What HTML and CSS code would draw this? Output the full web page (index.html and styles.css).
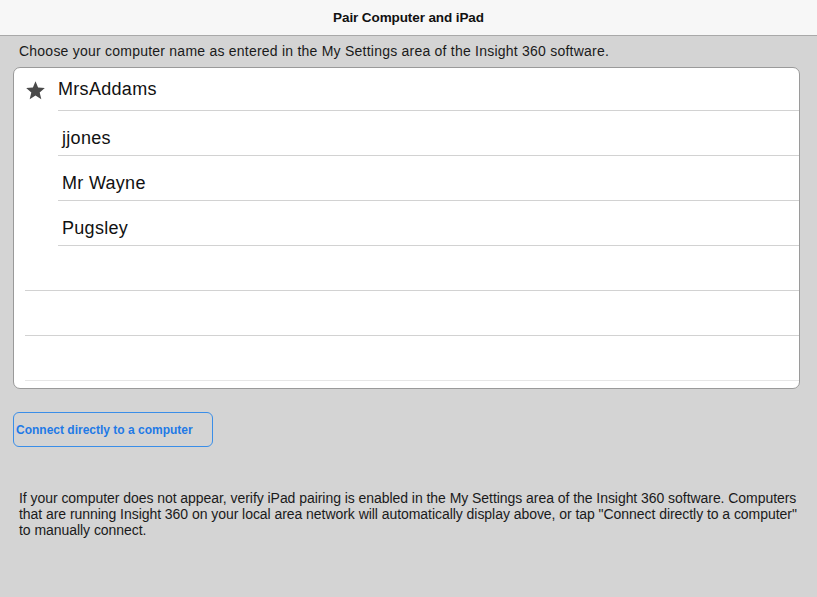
FILE: index.html
```html
<!DOCTYPE html>
<html>
<head>
<meta charset="utf-8">
<link rel="stylesheet" href="styles.css">
</head>
<body>
<header class="bar"><h1 class="title">Pair Computer and iPad</h1></header>
<main class="content">
  <p class="intro">Choose your computer name as entered in the My Settings area of the Insight 360 software.</p>
  <div class="card">
    <div class="row row-first">
      <svg class="star" viewBox="0 0 24 24" width="21" height="20"><path d="M12 1.5l3.1 7.6 8.1.6-6.2 5.3 2 8-7-4.4-7 4.4 2-8L.8 9.7l8.1-.6z" fill="#4a4a4a"/></svg>
      <span class="name name-first">MrsAddams</span>
    </div>
    <div class="row"><span class="name">jjones</span></div>
    <div class="row"><span class="name">Mr Wayne</span></div>
    <div class="row"><span class="name">Pugsley</span></div>
    <div class="row row-empty"></div>
    <div class="row row-empty"></div>
    <div class="row row-empty"></div>
  </div>
  <button class="connect">Connect directly to a computer</button>
  <p class="note">If your computer does not appear, verify iPad pairing is enabled in the My Settings area of the Insight 360 software. Computers<br>that are running Insight 360 on your local area network will automatically display above, or tap "Connect directly to a computer"<br>to manually connect.</p>
</main>
</body>
</html>
```
FILE: styles.css
```css
* { box-sizing: border-box; }
html, body { margin: 0; padding: 0; }
body {
  width: 817px;
  height: 597px;
  background: #d4d4d4;
  font-family: "Liberation Sans", Arial, sans-serif;
  color: #1a1a1a;
  overflow: hidden;
}
.bar {
  height: 36px;
  background: #f7f7f7;
  border-bottom: 1px solid #a9a9a9;
  display: flex;
  align-items: center;
  justify-content: center;
}
.title {
  margin: 0;
  font-size: 13.5px;
  font-weight: bold;
  color: #111;
  letter-spacing: -0.1px;
}
.content {
  padding: 0 17px 0 13px;
}
.intro {
  margin: 0;
  padding: 7px 0 0 6px;
  height: 31px;
  font-size: 14px;
  line-height: 16px;
  color: #1a1a1a;
  letter-spacing: 0.23px;
  white-space: nowrap;
}
.card {
  background: #fff;
  border: 1px solid #9a9a9a;
  border-radius: 7px;
  height: 322px;
  overflow: hidden;
  padding-left: 11px;
}
.row {
  height: 45px;
  display: flex;
  align-items: center;
  border-bottom: 1px solid #d2d2d2;
  margin-left: 33px;
  padding-top: 11px;
}
.row-first {
  height: 43px;
  margin-left: 0;
  padding-top: 0;
  border-bottom: none;
  position: relative;
}
.row-first::after {
  content: "";
  position: absolute;
  left: 33px;
  right: 0;
  bottom: 0;
  border-bottom: 1px solid #d2d2d2;
}
.row-empty { margin-left: 0; }
.row-empty:last-child { border-bottom-color: #e6e6e6; }
.star { flex: none; margin-right: 12px; }
.name {
  font-size: 18px;
  letter-spacing: 0.3px;
  color: #111;
  padding-left: 4px;
}
.name-first { padding-left: 0; }
.connect {
  display: block;
  margin-top: 23px;
  width: 200px;
  height: 35px;
  padding: 0 0 0 2px;
  text-align: left;
  background: transparent;
  border: 1px solid #3a8ee8;
  border-radius: 6px;
  color: #1f7ae6;
  font-family: "Liberation Sans", Arial, sans-serif;
  font-weight: bold;
  font-size: 12px;
}
.note {
  margin: 0;
  padding: 43px 0 0 6px;
  font-size: 14px;
  line-height: 16px;
  color: #1a1a1a;
  letter-spacing: -0.05px;
  white-space: nowrap;
}
```
